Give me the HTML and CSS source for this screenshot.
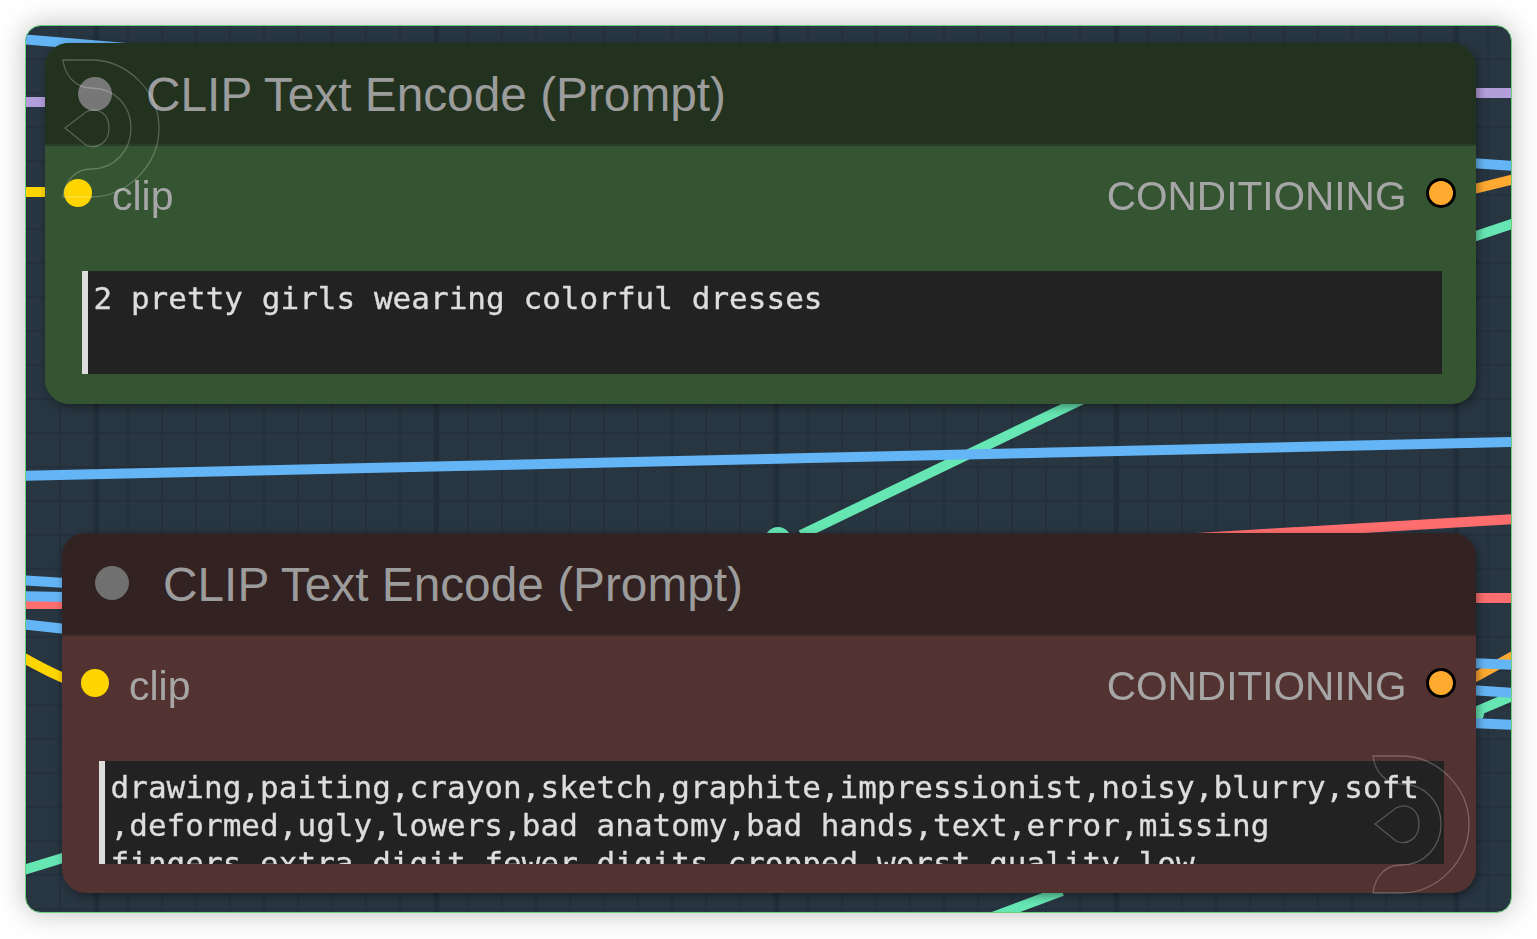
FILE: index.html
```html
<!DOCTYPE html>
<html lang="en">
<head>
<meta charset="utf-8">
<title>CLIP Text Encode</title>
<link rel="stylesheet" href="styles.css">
</head>
<body>
<div class="shadow">
<main class="frame">
  <svg class="wires" width="1485" height="886" viewBox="26 26 1485 886" fill="none">
    <g class="w-purple">
      <path d="M20 102H50"/><path d="M1470 93H1515"/>
    </g>
    <g class="w-yellow">
      <path d="M20 192H50"/><path d="M20 656C35 664 48 672 66 679"/>
    </g>
    <g class="w-green">
      <path d="M1470 238L1515 223"/>
      <path d="M1083 399L801 535"/>
      <path d="M20 871L66 857"/>
      <path d="M1470 714L1515 695"/>
      <path d="M990 918L1062 891"/>
    </g>
    <circle class="w-green-dot" cx="778" cy="540" r="13"/>
    <circle class="w-green-dot" cx="1476" cy="714" r="8"/>
    <g class="w-orange">
      <path d="M1470 190L1515 179"/><path d="M1470 680L1515 655"/>
    </g>
    <g class="w-red">
      <path d="M1180 539L1515 519"/><path d="M1470 598H1515"/><path d="M20 604H66"/>
    </g>
    <g class="w-blue">
      <path d="M20 39L150 50"/>
      <path d="M1470 163L1515 166"/>
      <path d="M20 476L1515 442"/>
      <path d="M20 580L66 583"/>
      <path d="M20 596L66 597"/>
      <path d="M20 624L66 629"/>
      <path d="M1470 663L1515 665"/>
      <path d="M1470 690L1515 693"/>
      <path d="M1470 723L1515 725"/>
    </g>
  </svg>

  <section class="node node-green">
    <header class="node-title"><span class="title-dot"></span><h2>CLIP Text Encode (Prompt)</h2></header>
    <div class="node-body">
      <div class="slots">
        <span class="slot slot-in"></span><span class="slot-label">clip</span>
        <span class="slot-label slot-label-out">CONDITIONING</span><span class="slot slot-out"></span>
      </div>
      <div class="prompt">2 pretty girls wearing colorful dresses</div>
    </div>
    <svg class="mark" width="100" height="140" viewBox="0 0 100 140" fill="none">
      <path d="M1 1H29C65 1 97 32 97 69S65 138 29 138H1C3 121 14 110 29 110C53 110 69 91 69 69S53 29 29 29C14 29 3 17 1 1Z"/>
      <path d="M3 69L24 53C36 47 47 55 47 69S36 91 24 86Z"/>
    </svg>
  </section>

  <section class="node node-red">
    <header class="node-title"><span class="title-dot"></span><h2>CLIP Text Encode (Prompt)</h2></header>
    <div class="node-body">
      <div class="slots">
        <span class="slot slot-in"></span><span class="slot-label">clip</span>
        <span class="slot-label slot-label-out">CONDITIONING</span><span class="slot slot-out"></span>
      </div>
      <div class="prompt">drawing,paiting,crayon,sketch,graphite,impressionist,noisy,blurry,soft<br>,deformed,ugly,lowers,bad anatomy,bad hands,text,error,missing<br>fingers,extra digit,fewer digits,cropped,worst quality,low</div>
    </div>
    <svg class="mark" width="100" height="140" viewBox="0 0 100 140" fill="none">
      <path d="M1 1H29C65 1 97 32 97 69S65 138 29 138H1C3 121 14 110 29 110C53 110 69 91 69 69S53 29 29 29C14 29 3 17 1 1Z"/>
      <path d="M3 69L24 53C36 47 47 55 47 69S36 91 24 86Z"/>
    </svg>
  </section>
</main>
</div>
</body>
</html>
```
FILE: styles.css
```css
* { box-sizing: border-box; }
html, body { margin: 0; height: 100%; background: #fff; }
body {
  padding: 25px;
  font-family: "Liberation Sans", Arial, sans-serif;
}
.shadow {
  border-radius: 16px;
  box-shadow: 0 0 28px rgba(0, 0, 0, .26);
}
.frame {
  position: relative;
  height: 888px;
  border: 1px solid #6ccf7a;
  border-radius: 16px;
  overflow: hidden;
  filter: blur(.45px);
  background-color: #283642;
  background-image:
    linear-gradient(90deg, #202e3a 0 4px, transparent 4px),
    linear-gradient(90deg, #24313d 0 2px, transparent 2px),
    linear-gradient(#24313d 0 2px, transparent 2px);
  background-size: 340px 100%, 34px 100%, 100% 34px;
  background-position: 69px 0, -1px 0, 0 32px;
}
.wires { position: absolute; left: 0; top: 0; }
.wires path { stroke-width: 10; }
.w-purple { stroke: #b39ddb; }
.w-yellow { stroke: #ffd500; }
.w-green { stroke: #66e6b3; }
.w-green-dot { fill: #66e6b3; }
.w-orange { stroke: #ffa931; }
.w-red { stroke: #ff6e6e; }
.w-blue { stroke: #64b5f6; }

.node {
  position: absolute;
  top: 17px;
  height: 361px;
  border-radius: 24px;
  box-shadow: 2px 3px 8px rgba(0, 0, 0, .4);
  display: flex;
  flex-direction: column;
}
.node-green { left: 18.5px; width: 1431px; background: #355431; --title: #22321f; --sep: #2a3d27; --pr: 34px; --dot: #777; --pt: 8px; }
.node-red { left: 35.5px; top: 506.5px; width: 1414px; height: 360.5px; background: #533332; --title: #322221; --sep: #3d2827; --pr: 32px; --dot: #707070; --pt: 7px; }
.node-title {
  flex: none;
  height: 103px;
  display: flex;
  align-items: center;
  gap: 34px;
  padding-left: 33.5px;
  border-radius: 24px 24px 0 0;
  border-bottom: 2px solid var(--sep);
  background: var(--title);
}
.title-dot { flex: none; width: 34px; height: 34px; border-radius: 50%; background: var(--dot); }
.node-title h2 {
  margin: 0;
  padding-top: 3px;
  font-size: 47.8px;
  font-weight: 400;
  line-height: 1;
  color: #9c9c9c;
}
.node-body { flex: 1; display: flex; flex-direction: column; }
.slots {
  flex: none;
  display: flex;
  align-items: center;
  height: 30px;
  margin-top: 32px;
  padding: 0 19.5px 0 19.5px;
}
.slot { flex: none; width: 28px; height: 28px; border-radius: 50%; }
.slot-in { background: #ffd500; }
.slot-out { width: 30px; height: 30px; background: #ffa92e; border: 3.5px solid #000; }
.slot-label {
  font-size: 41px;
  line-height: 30px;
  color: #a6a6a6;
  margin-left: 20px;
  position: relative;
  top: 3px;
}
.slot-label-out { font-size: 40.6px; margin-left: auto; margin-right: 19.5px; top: 3px; }
.prompt {
  height: 103px;
  margin: 63px var(--pr) 0 37px;
  padding: var(--pt) 8px 0 6px;
  overflow: hidden;
  white-space: nowrap;
  background: #222;
  border-left: 6px solid #ddd;
  font-family: "DejaVu Sans Mono", "Liberation Mono", monospace;
  font-size: 31px;
  letter-spacing: .03px;
  line-height: 38px;
  color: #ddd;
  -webkit-text-stroke: .35px #ddd;
}
.mark { position: absolute; pointer-events: none; }
.node-green .mark { left: 17px; top: 16px; }
.node-red .mark { left: 1310px; top: 222px; }
.mark path { stroke: rgba(255, 255, 255, .24); stroke-width: 1.3; }
```
